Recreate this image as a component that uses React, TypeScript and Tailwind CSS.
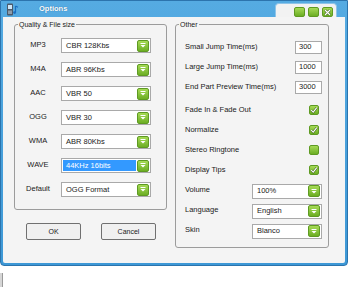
import React from "react";

const formats = [
  { label: "MP3", value: "CBR 128Kbs" },
  { label: "M4A", value: "ABR 96Kbs" },
  { label: "AAC", value: "VBR 50" },
  { label: "OGG", value: "VBR 30" },
  { label: "WMA", value: "ABR 80Kbs" },
  { label: "WAVE", value: "44KHz 16bits", selected: true },
  { label: "Default", value: "OGG Format" },
];

const times = [
  { label: "Small Jump Time(ms)", value: "300" },
  { label: "Large Jump Time(ms)", value: "1000" },
  { label: "End Part Preview Time(ms)", value: "3000" },
];

const checks = [
  { label: "Fade In & Fade Out", checked: true },
  { label: "Normalize", checked: true },
  { label: "Stereo Ringtone", checked: false },
  { label: "Display Tips", checked: true },
];

const combos = [
  { label: "Volume", value: "100%" },
  { label: "Language", value: "English" },
  { label: "Skin", value: "Blanco" },
];

function GreenArrow() {
  return (
    <div className="flex h-[12px] w-[12px] shrink-0 items-center justify-center rounded-[2px] border border-[#5e9a22] bg-gradient-to-b from-[#a6da55] to-[#6cae22]">
      <svg width="6" height="5" viewBox="0 0 6 5">
        <rect x="0.5" y="0" width="5" height="1" fill="#fff" />
        <path d="M0.5 2 L5.5 2 L3 4.6 Z" fill="#fff" />
      </svg>
    </div>
  );
}

function Combo({ value, width, selected }: { value: string; width: string; selected?: boolean }) {
  return (
    <div className={`flex h-[15px] items-center border border-[#a9a9a9] bg-white pl-[1px] pr-[1px] ${width}`}>
      <div className={`flex h-[11px] flex-1 items-center pl-[3px] ${selected ? "bg-[#3399ff] text-white" : "text-[#1a1a1a]"}`}>
        {value}
      </div>
      <div className="w-[1px]" />
      <GreenArrow />
    </div>
  );
}

function Check({ checked }: { checked: boolean }) {
  return (
    <div className="flex h-[10px] w-[10px] items-center justify-center rounded-[2px] border border-[#5e9a22] bg-gradient-to-b from-[#a6da55] to-[#6cae22]">
      {checked && (
        <svg width="8" height="8" viewBox="0 0 8 8">
          <path d="M1.2 4.2 L3.2 6.2 L6.8 1.6" fill="none" stroke="#3a5a1a" strokeWidth="2.2" />
          <path d="M1.2 4.2 L3.2 6.2 L6.8 1.6" fill="none" stroke="#fff" strokeWidth="1.2" />
        </svg>
      )}
    </div>
  );
}

function Group({ title, className, children }: { title: string; className: string; children: React.ReactNode }) {
  return (
    <div className={`relative rounded-[3px] border border-[#9c9c9c] ${className}`}>
      <span className="absolute -top-[5px] left-[3px] bg-[#f4f4f4] px-[1px] text-[7px] leading-[9px] text-[#202020]">
        {title}
      </span>
      {children}
    </div>
  );
}

function WinButton({ close }: { close?: boolean }) {
  return (
    <div className="flex h-[10px] w-[11px] items-center justify-center rounded-[2px] border border-[#5e9a22] bg-gradient-to-b from-[#a6da55] to-[#6cae22]">
      {close && (
        <svg width="7" height="7" viewBox="0 0 7 7">
          <path d="M1 1 L6 6 M6 1 L1 6" stroke="#3a5a1a" strokeWidth="2.4" />
          <path d="M1 1 L6 6 M6 1 L1 6" stroke="#fff" strokeWidth="1.2" />
        </svg>
      )}
    </div>
  );
}

export default function App() {
  return (
    <div className="h-[287px] w-[350px] overflow-hidden bg-white text-[7.5px] leading-[10px] text-[#1a1a1a] [font-family:'Liberation_Sans',Arial,sans-serif]">
      {/* Window */}
      <div className="flex h-[266px] w-[348px] flex-col rounded-b-[4px] border border-[#2c74ad] bg-gradient-to-b from-[#55abe2] to-[#3d98d6] px-[2px] pb-[2px]">
        {/* Title bar */}
        <div className="flex h-[16px] items-end">
          <div className="flex h-[16px] w-[32px] items-center pl-[3px]">
            <svg width="13" height="13" viewBox="0 0 13 13">
              <rect x="1" y="0.5" width="6" height="12" rx="1" fill="#4c5a6a" />
              <rect x="2" y="2" width="4" height="4" fill="#cfe6f7" />
              <rect x="2" y="7.5" width="4" height="3.5" fill="#8e9caa" />
              <path d="M9.5 3 L9.5 9.5" stroke="#1b6fc2" strokeWidth="1.2" />
              <circle cx="8.6" cy="9.6" r="1.4" fill="#1b6fc2" />
              <path d="M9.5 3 L12 4.2" stroke="#1b6fc2" strokeWidth="1.2" />
            </svg>
          </div>
          <div className="flex h-[16px] flex-1 items-center pl-[4px] text-[7.5px] font-bold text-white [text-shadow:0_0_1px_#1e5f94]">
            Options
          </div>
          <div className="flex h-[14px] w-[62px] items-end justify-end gap-[3px] rounded-t-[4px] border border-b-0 border-[#8fc4e8] bg-[#f2f2f2] pb-0 pr-[3px]">
            <WinButton />
            <WinButton />
            <WinButton close />
          </div>
          <div className="w-[8px]" />
        </div>

        {/* Body */}
        <div className="flex flex-1 items-start gap-[8px] rounded-b-[2px] bg-[#f4f4f4] pl-[11px] pt-[7px]">
          {/* Left column */}
          <div className="flex flex-col">
            <Group title="Quality & File size" className="flex h-[186px] w-[153px] flex-col gap-[9px] pt-[13px]">
              {formats.map((f) => (
                <div key={f.label} className="flex h-[15px] items-center">
                  <div className="w-[46px] pb-[2px] text-center">{f.label}</div>
                  <Combo value={f.value} width="w-[90px]" selected={f.selected} />
                </div>
              ))}
            </Group>
            <div className="mt-[13px] flex gap-[20px] pl-[12px]">
              <div className="flex h-[17px] w-[55px] items-center justify-center rounded-[2px] border border-[#707070] bg-[#f0f0f0] text-[7px]">
                OK
              </div>
              <div className="flex h-[17px] w-[55px] items-center justify-center rounded-[2px] border border-[#707070] bg-[#f0f0f0] text-[7px]">
                Cancel
              </div>
            </div>
          </div>

          {/* Right column */}
          <Group title="Other" className="flex h-[224px] w-[154px] flex-col pl-[9px] pr-[6px] pt-[12px]">
            {times.map((t) => (
              <div key={t.label} className="flex h-[20px] items-center justify-between">
                <span>{t.label}</span>
                <div className="flex h-[13px] w-[27px] items-center border border-[#a9a9a9] bg-white pl-[3px]">
                  {t.value}
                </div>
              </div>
            ))}
            <div className="mt-[3px] flex flex-col">
              {checks.map((c) => (
                <div key={c.label} className="flex h-[20px] items-center justify-between pr-[3px]">
                  <span>{c.label}</span>
                  <Check checked={c.checked} />
                </div>
              ))}
            </div>
            <div className="mt-[1px] flex flex-col">
              {combos.map((c) => (
                <div key={c.label} className="flex h-[20px] items-center justify-between">
                  <span className="pb-[3px]">{c.label}</span>
                  <Combo value={c.value} width="w-[70px]" />
                </div>
              ))}
            </div>
          </Group>
        </div>
      </div>
      <div className="mt-[7px] h-[14px] w-[3px] border-r border-[#9a9a9a] bg-[#d6d6d6]" />
    </div>
  );
}
